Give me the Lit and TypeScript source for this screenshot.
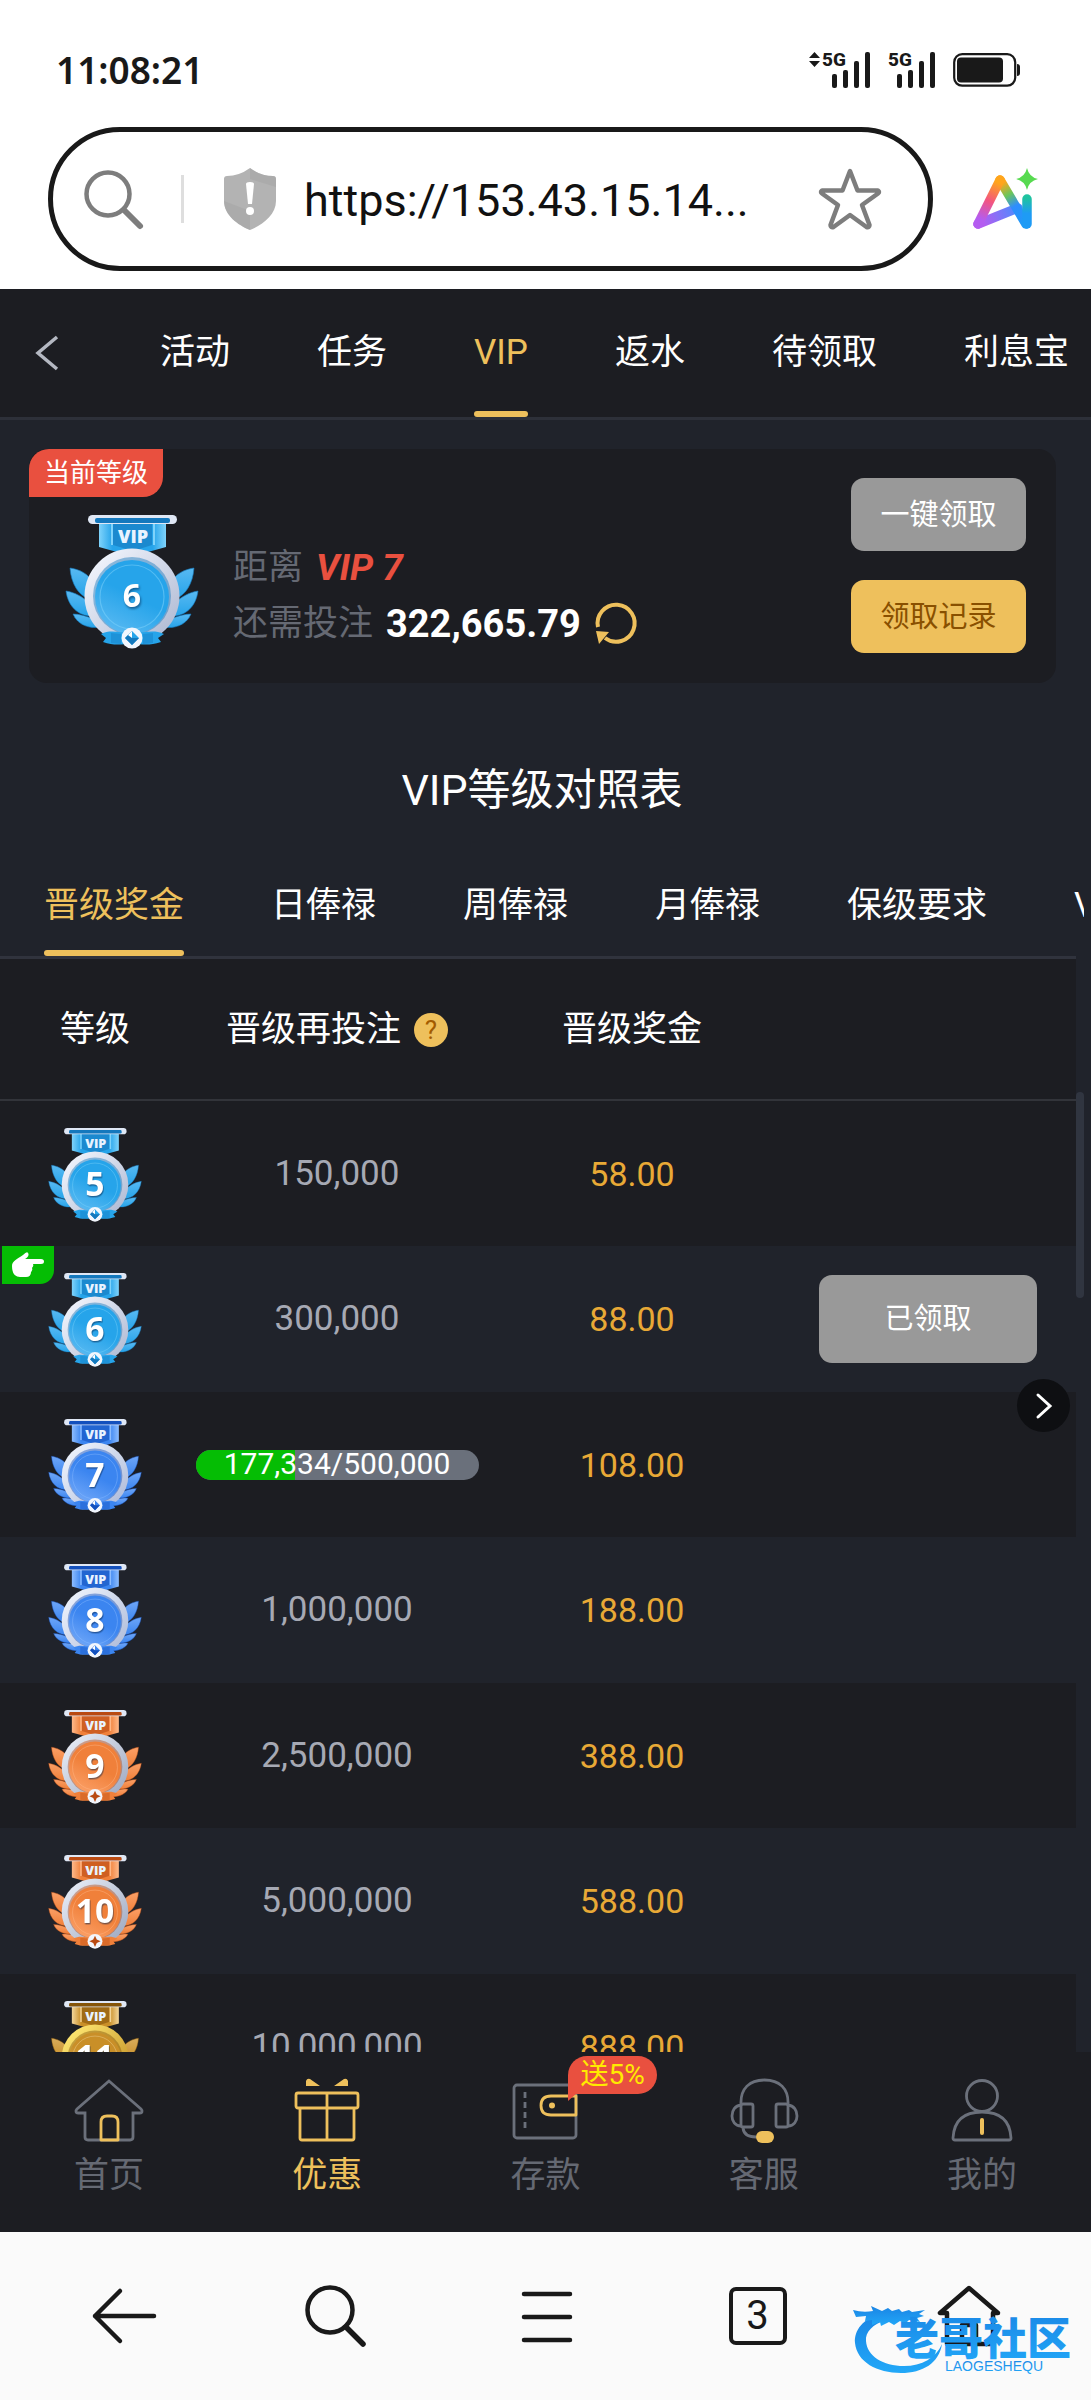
import { LitElement, html, svg, css, nothing } from "lit";
import { customElement, property, state } from "lit/decorators.js";
import { classMap } from "lit/directives/class-map.js";

type Tier = "sky" | "blue" | "orange" | "gold";

interface Palette {
  light: string;
  leaf: string;
  main: string;
  deep: string;
  ringTop: string;
  ringBottom: string;
}

interface Level {
  level: number;
  tier: Tier;
  need: string;
  bonus: string;
  current?: boolean;
  progress?: number;
  claimed?: boolean;
}

const PALETTES: Record<Tier, Palette> = {
  sky: { light: "#7fd3fb", leaf: "#58b9f2", main: "#26a4ea", deep: "#1478bd", ringTop: "#f1f4fc", ringBottom: "#a9b4cf" },
  blue: { light: "#8dbdff", leaf: "#6ea6f8", main: "#3b85f0", deep: "#1350bd", ringTop: "#eef3fc", ringBottom: "#a9b6d6" },
  orange: { light: "#ffb98a", leaf: "#fb9f66", main: "#f0803a", deep: "#b94a12", ringTop: "#e6ebf5", ringBottom: "#99a4bd" },
  gold: { light: "#f3d69a", leaf: "#d9ad5c", main: "#c98f28", deep: "#855408", ringTop: "#ffe873", ringBottom: "#b98317" },
};

const LEVELS: Level[] = [
  { level: 5, tier: "sky", need: "150,000", bonus: "58.00" },
  { level: 6, tier: "sky", need: "300,000", bonus: "88.00", current: true, claimed: true },
  { level: 7, tier: "blue", need: "177,334/500,000", bonus: "108.00", progress: 35 },
  { level: 8, tier: "blue", need: "1,000,000", bonus: "188.00" },
  { level: 9, tier: "orange", need: "2,500,000", bonus: "388.00" },
  { level: 10, tier: "orange", need: "5,000,000", bonus: "588.00" },
  { level: 11, tier: "gold", need: "10,000,000", bonus: "888.00" },
];

@customElement("vip-medal")
export class VipMedal extends LitElement {
  @property({ type: Number }) level = 0;
  @property() tier: Tier = "sky";
  @property({ type: Number }) digits = 48;

  static styles = css`
    :host {
      display: block;
      aspect-ratio: 1;
    }
    svg {
      display: block;
      width: 100%;
      height: 100%;
    }
    text {
      font-family: "Open Sans", "Noto Sans", sans-serif;
      font-weight: 800;
      text-anchor: middle;
    }
    .num {
      fill: #fff;
      font-weight: 700;
      filter: drop-shadow(1px 2px 1px rgba(0, 30, 70, 0.5));
    }
  `;

  private leaves(full: boolean) {
    return svg`
      <path d="M29 79c8 1 16 5 20 10l-3 20c-8-3-16-14-17-30z"/>
      <path d="M25 102c8 1 17 6 22 11l3 14c-12 0-23-9-25-25z"/>
      <path d="M32 125c6 0 14 2 20 5l8 8c-10 2-23-1-28-13z"/>
      ${full ? svg`<path d="M44 139c6-1 14 0 20 3l6 8c-10 0-21-2-26-11z"/>` : nothing}
    `;
  }

  render() {
    const p = PALETTES[this.tier];
    const full = this.tier !== "sky";
    return html`
      <svg viewBox="24 26 134 134" role="img" aria-label="VIP ${this.level}">
        <defs>
          <linearGradient id="ring" x1="0" y1="0" x2="1" y2="1">
            <stop offset="0.1" stop-color=${p.ringTop} />
            <stop offset="1" stop-color=${p.ringBottom} />
          </linearGradient>
          <linearGradient id="leaf" x1="0" y1="0" x2="0" y2="1">
            <stop offset="0" stop-color=${p.leaf} />
            <stop offset="1" stop-color=${p.main} />
          </linearGradient>
          <linearGradient id="face" x1="0.8" y1="0" x2="0.3" y2="1">
            <stop offset="0" stop-color=${p.main} />
            <stop offset="0.5" stop-color=${p.main} />
            <stop offset="1" stop-color=${p.leaf} />
          </linearGradient>
          <linearGradient id="flag" x1="0" y1="0" x2="1" y2="0">
            <stop offset="0" stop-color=${p.light} />
            <stop offset="0.2" stop-color=${p.main} />
            <stop offset="0.8" stop-color=${p.main} />
            <stop offset="1" stop-color=${p.light} />
          </linearGradient>
        </defs>
        <path d="M58 31h67v27l-18 5h-31l-18-5z" fill="url(#flag)" />
        <path d="M72 31h39v25l-19 6-20-6z" fill=${p.deep} opacity="0.6" />
        <path d="M71 34v22M113 34v22" stroke=${p.light} stroke-width="2" />
        <rect x="47" y="26" width="89" height="9" rx="4.5" fill="#dfe7f5" />
        <rect x="54" y="29" width="75" height="5" rx="2" fill=${p.deep} />
        <g fill="url(#leaf)" stroke=${p.deep} stroke-width="0.6">${this.leaves(full)}</g>
        <g fill="url(#leaf)" stroke=${p.deep} stroke-width="0.6" transform="translate(182 0) scale(-1 1)">
          ${this.leaves(full)}
        </g>
        <circle cx="91" cy="107" r="47.5" fill="url(#ring)" />
        <circle cx="91" cy="107" r="39" fill=${p.deep} opacity="0.45" />
        <circle cx="91" cy="108" r="37" fill="url(#face)" />
        <circle cx="91" cy="108" r="32" fill="none" stroke=${p.light} stroke-width="1.2" opacity="0.5" />
        <path d="M60 145c10-5 18-1 31-1s21-4 32 1l-6 4 3 4c-12 4-18 2-29 2s-18 2-29-2l3-4z" fill=${p.main} />
        <path d="M70 144l10 1v10l-10-1zM102 145l10-1v10l-10 1z" fill=${p.deep} opacity="0.4" />
        <circle cx="91" cy="149" r="10.5" fill="#f2f6fd" />
        ${this.tier === "orange" || this.tier === "gold"
          ? svg`<path d="M91 141l2.500 5.500 5.500 2.500-5.500 2.500-2.500 5.500-2.500-5.500-5.500-2.500 5.500-2.500z" fill=${p.deep}/>`
          : svg`<path d="M91 142l7 7-7 7-7-7z" fill=${p.main}/><path d="M91 142v7h7l-7 7-7-7z" fill=${p.deep}/><path d="M87 146l4 3v-7z" fill="#fff"/>`}
        <text x="92" y="54" font-size="18" fill="#e9f3ff">VIP</text>
        <text class="num" x="91" y=${106 + this.digits * 0.36} font-size=${this.digits}>${this.level}</text>
      </svg>
    `;
  }
}

const icons = {
  home: svg`
    <path class="line" d="M35 3L3 31c-2 2-1 4 1 4h7v24q0 3 3 3h42q3 0 3-3V35h7c2 0 3-2 1-4z"/>
    <path class="accent" d="M27 62V44q0-6 6-6h5q6 0 6 6v18z"/>`,
  gift: svg`
    <path class="solid" d="M14 3q1-3 4-2l10 7H14zM56 3q-1-3-4-2l-10 7h14z"/>
    <rect class="accent" x="4" y="15" width="62" height="15" rx="2"/>
    <path class="accent" d="M8 30v30q0 2 2 2h50q2 0 2-2V30M35 15v47"/>`,
  wallet: svg`
    <rect class="line" x="4" y="7" width="62" height="53" rx="3"/>
    <path class="line" d="M15 14v36" stroke-dasharray="6 4"/>
    <path class="accent" d="M66 18H41q-10 0-10 9.500t10 9.500h25z"/>
    <circle class="solid" cx="42" cy="27.500" r="3"/>`,
  headset: svg`
    <path class="line" d="M12 27C11 10 21 2 35.500 2S60 10 59 27M12 27c-12 1-12 21 0 21M59 27c12 1 12 21 0 21M14 50q1 9 13 9"/>
    <rect class="line" x="12" y="26" width="12" height="23" rx="2"/>
    <rect class="line" x="47" y="26" width="12" height="23" rx="2"/>
    <rect class="solid" x="27" y="53" width="18" height="12" rx="6"/>`,
  user: svg`
    <circle class="line" cx="35" cy="18" r="15.500"/>
    <path class="line" d="M6 60C7 41 19 34 35 34s28 7 29 26q0 2-2 2H8q-2 0-2-2z"/>
    <path class="accent thick" d="M35 42v13"/>`,
};

const TOP_TABS = ["活动", "任务", "VIP", "返水", "待领取", "利息宝"];
const TABLE_TABS = ["晋级奖金", "日俸禄", "周俸禄", "月俸禄", "保级要求", "VIP"];
const DOCK = [
  { label: "首页", icon: icons.home },
  { label: "优惠", icon: icons.gift },
  { label: "存款", icon: icons.wallet, badge: "送5%" },
  { label: "客服", icon: icons.headset },
  { label: "我的", icon: icons.user },
];

@customElement("app-root")
export class AppRoot extends LitElement {
  @state() private topTab = 2;
  @state() private tableTab = 0;
  @state() private dockTab = 1;

  static styles = css`
    :host {
      --dark: #1c1d22;
      --page: #20232b;
      --gold: #eec05c;
      --muted: #656973;
      display: flex;
      flex-direction: column;
      height: 100vh;
      background: var(--page);
      color: #fff;
      font-family: Roboto, "Noto Sans CJK SC", sans-serif;
      font-size: 35px;
      line-height: 42px;
    }
    * {
      box-sizing: border-box;
    }
    svg {
      display: block;
      flex: none;
      overflow: visible;
    }
    button {
      border: 0;
      padding: 0;
      background: none;
      color: inherit;
      font: inherit;
      white-space: nowrap;
      cursor: pointer;
    }
    a {
      color: inherit;
      text-decoration: none;
    }

    .browser {
      flex: none;
      padding-bottom: 18px;
      background: #fff;
      color: #191919;
    }
    .status {
      display: flex;
      align-items: center;
      height: 127px;
      padding: 13px 70px 0 56px;
    }
    .time {
      flex: 1;
      font-size: 37px;
      font-weight: 600;
      font-family: "Noto Sans", sans-serif;
    }
    .signals {
      display: flex;
      align-items: center;
      gap: 17px;
    }
    .net {
      font-family: Roboto, sans-serif;
      font-weight: 800;
      font-size: 19px;
    }
    .address {
      display: flex;
      align-items: center;
      gap: 40px;
      padding: 0 52px 0 48px;
    }
    .pill {
      display: flex;
      flex: 1;
      align-items: center;
      min-width: 0;
      height: 144px;
      padding: 0 46px 0 30px;
      border: 5px solid #191919;
      border-radius: 72px;
    }
    .divider {
      width: 3px;
      height: 48px;
      margin: 0 38px 0 37px;
      background: #dedede;
    }
    .url {
      flex: 1;
      min-width: 0;
      height: 64px;
      margin-left: 26px;
      padding: 2px 0 0;
      border: 0;
      outline: 0;
      background: none;
      color: #111;
      font: 45px Roboto, sans-serif;
    }

    .topnav {
      display: flex;
      flex: none;
      align-items: stretch;
      height: 131px;
      border-bottom: 3px solid #2d3039;
      background: var(--dark);
      overflow: hidden;
    }
    .back {
      width: 160px;
      padding-left: 35px;
    }
    .tabs {
      display: flex;
      gap: 87px;
    }
    .tab {
      position: relative;
      flex: none;
    }
    .tab.on {
      color: var(--gold);
    }
    .tab.on::after {
      content: "";
      position: absolute;
      left: 0;
      right: 0;
      bottom: 0;
      height: 6px;
      border-radius: 3px;
      background: var(--gold);
    }

    main {
      display: flex;
      flex: 1;
      flex-direction: column;
      min-height: 0;
      overflow: hidden;
    }
    .card {
      position: relative;
      display: flex;
      flex: none;
      align-items: flex-start;
      min-height: 234px;
      margin: 29px 35px 0 29px;
      padding: 29px 30px 0 36px;
      border-radius: 18px;
      background: var(--dark);
    }
    .badge {
      position: absolute;
      left: 0;
      top: 0;
      padding: 3px 15px;
      border-radius: 20px 0;
      background: #e9503f;
      font-size: 26px;
    }
    .card vip-medal {
      width: 134px;
      margin-top: 37px;
    }
    .goal {
      flex: 1;
      margin: 62px 0 0 34px;
      color: var(--muted);
      line-height: 56px;
    }
    .goal p {
      display: flex;
      align-items: center;
      gap: 13px;
      margin: 0;
    }
    .goal em {
      color: #e9503f;
      font-size: 37px;
      font-weight: 700;
    }
    .goal strong {
      color: #fff;
      font-size: 38px;
    }
    .actions {
      display: flex;
      flex-direction: column;
      gap: 29px;
    }
    .btn {
      width: 175px;
      height: 73px;
      border-radius: 13px;
      background: var(--gold);
      color: #895000;
      font-size: 29px;
    }
    .btn.off {
      background: #999;
      color: #fff;
    }
    .btn.wide {
      width: 218px;
      height: 88px;
    }
    h1 {
      flex: none;
      margin: 77px 7px 0 0;
      font-size: 43px;
      font-weight: 400;
      line-height: 60px;
      text-align: center;
    }
    .tabletabs {
      flex: none;
      height: 99px;
      margin: 37px 7px 0 0;
      padding-left: 44px;
      overflow: hidden;
    }
    .tabletabs .tab {
      padding-bottom: 2px;
    }

    .panel {
      position: relative;
      flex: 1;
      min-height: 0;
      padding-right: 15px;
      overflow: hidden;
    }
    table {
      width: 100%;
      table-layout: fixed;
      border-spacing: 0;
      border-top: 3px solid #30333d;
    }
    .c1 {
      width: 190px;
    }
    .c2 {
      width: 294px;
    }
    th,
    td {
      padding: 0;
      text-align: center;
      vertical-align: middle;
      font-weight: 400;
    }
    th {
      height: 142px;
      padding-top: 2px;
      border-bottom: 2px solid #32343a;
      background: var(--dark);
      white-space: nowrap;
    }
    td {
      position: relative;
      height: 146px;
      color: #a6a9b4;
    }
    tr:nth-child(odd) td {
      height: 145px;
      background: var(--dark);
    }
    td vip-medal {
      width: 94px;
      margin: 2px auto 0;
    }
    td.bonus {
      color: #e8a936;
      font-size: 34px;
    }
    .head {
      display: flex;
      align-items: center;
      justify-content: center;
      gap: 13px;
    }
    .help {
      width: 34px;
      height: 34px;
      border-radius: 50%;
      background: var(--gold);
      color: #a35b00;
      font-size: 26px;
      line-height: 34px;
    }
    .here {
      position: absolute;
      left: 2px;
      top: 0;
      display: grid;
      place-items: center;
      width: 52px;
      height: 38px;
      border-radius: 0 0 14px 0;
      background: #05bd04;
    }
    .meter {
      position: relative;
      display: block;
      width: 283px;
      height: 30px;
      margin: 0 auto;
      border-radius: 15px;
      background: #6a707b;
      color: #fff;
      font-size: 30px;
      line-height: 28px;
      overflow: hidden;
    }
    .fill {
      position: absolute;
      inset: 0 auto 0 0;
      background: #05bd04;
    }
    .count {
      position: relative;
    }
    .thumb {
      position: absolute;
      right: 7px;
      top: 136px;
      width: 8px;
      height: 206px;
      border-radius: 4px;
      background: #303540;
    }
    .next {
      position: absolute;
      right: 21px;
      top: 423px;
      display: grid;
      place-items: center;
      width: 53px;
      height: 53px;
      border-radius: 50%;
      background: #0e0f12;
    }

    .dock {
      display: grid;
      flex: none;
      grid-template-columns: repeat(5, 1fr);
      height: 180px;
      background: var(--dark);
      color: var(--muted);
    }
    .dock a {
      position: relative;
      display: flex;
      flex-direction: column;
      align-items: center;
      gap: 9px;
      padding-top: 26px;
    }
    .dock a.on {
      color: var(--gold);
    }
    .line {
      fill: none;
      stroke: #6b707b;
      stroke-width: 2.8;
    }
    .accent {
      fill: none;
      stroke: var(--gold);
      stroke-width: 2.8;
      stroke-linejoin: round;
    }
    .thick {
      stroke-width: 4;
      stroke-linecap: round;
    }
    .solid {
      fill: var(--gold);
    }
    .promo {
      position: absolute;
      left: calc(50% + 23px);
      top: 4px;
      padding: 0 12px;
      border-radius: 19px 19px 19px 0;
      background: #e9503f;
      color: #ffea00;
      font-size: 28px;
      line-height: 38px;
      white-space: nowrap;
    }
    .promo::after {
      content: "";
      position: absolute;
      left: 0;
      top: 37px;
      border-top: 8px solid #e9503f;
      border-right: 9px solid transparent;
    }

    .chrome {
      position: relative;
      display: grid;
      flex: none;
      grid-template-columns: repeat(5, 1fr);
      height: 168px;
      padding: 0 17px 0 19px;
      background: #fafafa;
      color: #191919;
    }
    .chrome button {
      display: grid;
      place-items: center;
    }
    .pages {
      display: grid;
      place-items: center;
      width: 58px;
      height: 58px;
      border: 4px solid #191919;
      border-radius: 7px;
      font-size: 40px;
    }
    .stroke {
      fill: none;
      stroke: currentColor;
      stroke-width: 4.5;
      stroke-linecap: round;
      stroke-linejoin: round;
    }
    .gray {
      color: #7d7d7d;
    }
    .mark {
      position: absolute;
      right: 14px;
      top: 70px;
      pointer-events: none;
    }
    .brand {
      font-family: "Noto Sans CJK SC", sans-serif;
      font-size: 44px;
      font-weight: 900;
    }
    .latin {
      font-family: "Liberation Sans", sans-serif;
      font-size: 14px;
    }
  `;

  private bars(x: number) {
    return svg`
      <rect x=${x} y="22" width="5" height="14" rx="2"/>
      <rect x=${x + 11} y="18" width="5" height="18" rx="2"/>
      <rect x=${x + 22} y="9" width="5" height="27" rx="2"/>
      <rect x=${x + 33} y="0" width="5" height="36" rx="2"/>`;
  }

  private renderBrowserTop() {
    return html`
      <header class="browser">
        <div class="status">
          <span class="time">11:08:21</span>
          <div class="signals">
            <svg width="62" height="36" fill="#191919">
              <path d="M0 6l5.500-6L11 6zM0 9h11l-5.500 6z" />
              <text class="net" x="13" y="14">5G</text>
              ${this.bars(23)}
            </svg>
            <svg width="48" height="36" fill="#191919">
              <text class="net" x="0" y="14">5G</text>
              ${this.bars(9)}
            </svg>
            <svg width="68" height="34" fill="#191919">
              <rect x="1.200" y="1.200" width="61" height="31.500" rx="8" fill="none" stroke="#191919" stroke-width="2.200" />
              <rect x="4" y="4.500" width="46" height="25" rx="4" />
              <path d="M64 11q3 0 3 3v6q0 3-3 3z" />
            </svg>
          </div>
        </div>
        <div class="address">
          <div class="pill">
            <svg class="stroke gray" width="61" height="61" viewBox="0 0 61 61">
              <circle cx="25" cy="25" r="21.500" />
              <path d="M41 41l16 16" stroke-width="6" />
            </svg>
            <span class="divider"></span>
            <svg width="56" height="64" viewBox="0 0 56 64">
              <path d="M28 1q11 8 23 8 3 0 3 3v22c0 14-14 24-26 29C16 58 2 48 2 34V12q0-3 3-3 12 0 23-8z" fill="#b3b3b3" />
              <path d="M28 1q11 8 23 8 3 0 3 3v8L28 12zM2 34l26 10v19C16 58 2 48 2 34z" fill="#a3a3a3" opacity="0.5" />
              <path d="M24 17q0-2 4-2t4 2l-2 20h-4z" fill="#fff" />
              <circle cx="28" cy="44" r="4" fill="#fff" />
            </svg>
            <input class="url" aria-label="网址" .value=${"https://153.43.15.14..."} />
            <svg class="stroke gray" width="64" height="62" viewBox="0 0 64 62">
              <path d="M32 3l7.500 19.500H60Q62 24 60 25.500L44 37l7.500 20q0 3-3 2L32 47 15.500 59q-3 1-3-2L20 37 4 25.500q-2-1.500 0-3h20.500z" />
            </svg>
          </div>
          <svg width="66" height="66" viewBox="0 0 66 66" role="img" aria-label="Ai">
            <defs>
              <linearGradient id="a1" gradientUnits="userSpaceOnUse" x1="27" y1="12" x2="6" y2="58">
                <stop offset="0.1" stop-color="#ffa51c" />
                <stop offset="0.5" stop-color="#f3557f" />
                <stop offset="0.9" stop-color="#b45cf0" />
              </linearGradient>
              <linearGradient id="a2" gradientUnits="userSpaceOnUse" x1="6" y1="58" x2="44" y2="42">
                <stop offset="0.1" stop-color="#b45cf0" />
                <stop offset="1" stop-color="#4a8cff" />
              </linearGradient>
              <linearGradient id="a3" gradientUnits="userSpaceOnUse" x1="27" y1="12" x2="54" y2="58">
                <stop offset="0.1" stop-color="#ffa51c" />
                <stop offset="0.35" stop-color="#6cc65a" />
                <stop offset="0.6" stop-color="#2f8dff" />
                <stop offset="1" stop-color="#1e9bf5" />
              </linearGradient>
              <linearGradient id="a4" gradientUnits="userSpaceOnUse" x1="0" y1="32" x2="0" y2="58">
                <stop offset="0" stop-color="#1fc3a0" />
                <stop offset="0.6" stop-color="#1e9bf5" />
              </linearGradient>
            </defs>
            <g fill="none" stroke-width="9.500" stroke-linecap="round">
              <path d="M5 58l40-16" stroke="url(#a2)" />
              <path d="M27 14l26 44" stroke="url(#a3)" />
              <path d="M27 14L5 58" stroke="url(#a1)" />
              <path d="M54 33v25" stroke="url(#a4)" />
            </g>
            <path d="M54 2q2 9 11 11-9 2-11 11-2-9-11-11 9-2 11-11z" fill="#57da50" />
          </svg>
        </div>
      </header>
    `;
  }

  private renderCard() {
    return html`
      <section class="card">
        <span class="badge">当前等级</span>
        <vip-medal .level=${6} .digits=${32}></vip-medal>
        <div class="goal">
          <p>距离 <em>VIP 7</em></p>
          <p>
            还需投注 <strong>322,665.79</strong>
            <button aria-label="刷新">
              <svg width="44" height="44" viewBox="0 0 44 44">
                <path d="M4 25A18.500 18.500 0 1 1 11 36" fill="none" stroke="#eec05c" stroke-width="4" />
                <path d="M2 29l13 1-10 12z" fill="#eec05c" />
              </svg>
            </button>
          </p>
        </div>
        <div class="actions">
          <button class="btn off">一键领取</button>
          <button class="btn">领取记录</button>
        </div>
      </section>
    `;
  }

  private renderRow(row: Level) {
    return html`
      <tr>
        <td>
          ${row.current
            ? html`<span class="here">
                <svg width="34" height="26" viewBox="0 0 34 26" fill="#fff">
                  <path d="M1 14C1 9 6 7 12 3q4-4 5-2c2 3-2 5-3 6h16q3 0 3 2.500T30 12h-8q1 2-1 4 1 2-1 4 0 5-5 5H9q-8 0-8-11z" />
                </svg>
              </span>`
            : nothing}
          <vip-medal .level=${row.level} .tier=${row.tier}></vip-medal>
        </td>
        <td>
          ${row.progress === undefined
            ? row.need
            : html`<span class="meter">
                <span class="fill" style="width:${row.progress}%"></span>
                <span class="count">${row.need}</span>
              </span>`}
        </td>
        <td class="bonus">${row.bonus}</td>
        <td>${row.claimed ? html`<button class="btn off wide">已领取</button>` : nothing}</td>
      </tr>
    `;
  }

  render() {
    return html`
      ${this.renderBrowserTop()}
      <nav class="topnav">
        <button class="back" aria-label="返回">
          <svg width="24" height="36" viewBox="0 0 24 36" fill="none" stroke="#b4b8c2" stroke-width="3.500">
            <path d="M22 2L3 18l19 16" />
          </svg>
        </button>
        <div class="tabs">
          ${TOP_TABS.map(
            (t, i) => html`<button
              class=${classMap({ tab: true, on: i === this.topTab })}
              @click=${() => (this.topTab = i)}
            >${t}</button>`,
          )}
        </div>
      </nav>
      <main>
        ${this.renderCard()}
        <h1>VIP等级对照表</h1>
        <div class="tabs tabletabs">
          ${TABLE_TABS.map(
            (t, i) => html`<button
              class=${classMap({ tab: true, on: i === this.tableTab })}
              @click=${() => (this.tableTab = i)}
            >${t}</button>`,
          )}
        </div>
        <div class="panel">
          <table>
            <colgroup>
              <col class="c1" />
              <col class="c2" />
              <col />
              <col />
            </colgroup>
            <thead>
              <tr>
                <th>等级</th>
                <th>
                  <span class="head">晋级再投注<button class="help" aria-label="说明">?</button></span>
                </th>
                <th>晋级奖金</th>
                <th></th>
              </tr>
            </thead>
            <tbody>
              ${LEVELS.map((row) => this.renderRow(row))}
            </tbody>
          </table>
          <span class="thumb"></span>
          <button class="next" aria-label="下一页">
            <svg width="18" height="28" viewBox="0 0 18 28" fill="none" stroke="#fff" stroke-width="3" stroke-linecap="round">
              <path d="M3 3l12 11L3 25" />
            </svg>
          </button>
        </div>
      </main>
      <nav class="dock">
        ${DOCK.map(
          (d, i) => html`<a href="#" class=${classMap({ on: i === this.dockTab })} @click=${() => (this.dockTab = i)}>
            <svg width="70" height="68" viewBox="0 0 70 68">${d.icon}</svg>
            <span>${d.label}</span>
            ${d.badge ? html`<span class="promo">${d.badge}</span>` : nothing}
          </a>`,
        )}
      </nav>
      <footer class="chrome">
        <button aria-label="后退">
          <svg class="stroke" width="66" height="56" viewBox="0 0 66 56"><path d="M28 3L3 28l25 25M3 28h59" /></svg>
        </button>
        <button aria-label="搜索">
          <svg class="stroke" width="64" height="64" viewBox="0 0 64 64">
            <circle cx="26" cy="26" r="22.500" />
            <path d="M42 43l17 17" stroke-width="5.500" />
          </svg>
        </button>
        <button aria-label="菜单">
          <svg class="stroke" width="52" height="54" viewBox="0 0 52 54"><path d="M3 5h46M3 28h46M3 51h46" /></svg>
        </button>
        <button aria-label="标签页"><span class="pages">3</span></button>
        <button aria-label="主页">
          <svg class="stroke" width="64" height="62" viewBox="0 0 64 62">
            <path d="M32 3L3 28h7v31h46V28h5zM25 58V40h14v18" />
          </svg>
        </button>
        <svg class="mark" width="224" height="74" viewBox="0 0 224 74" role="img" aria-label="老哥社区">
          <defs>
            <linearGradient id="wm" x1="0" y1="0" x2="0" y2="1">
              <stop offset="0" stop-color="#1a84e4" />
              <stop offset="1" stop-color="#22a8f8" />
            </linearGradient>
          </defs>
          <g fill="url(#wm)">
            <path d="M28 11C10 17 1 28 2 41c2 19 22 30 46 30 22 0 38-10 41-29-6 14-20 22-38 22-21 0-37-10-38-25-1-9 7-17 20-21z" />
            <path d="M0 8q10 3 20 1l-2-5 11 5 6-3 4 3 7-2 3 3 7-2 3 2 13-2-6 4 5 2-7 2 3 4-11-2-4 4-5-3-6 4-5-3-8 4-1-4-8 3v-5l-7 1 1-5-10 1z" />
            <text class="brand" x="42" y="53">老哥社区</text>
            <text class="latin" x="92" y="69">LAOGESHEQU</text>
          </g>
        </svg>
      </footer>
    `;
  }
}
